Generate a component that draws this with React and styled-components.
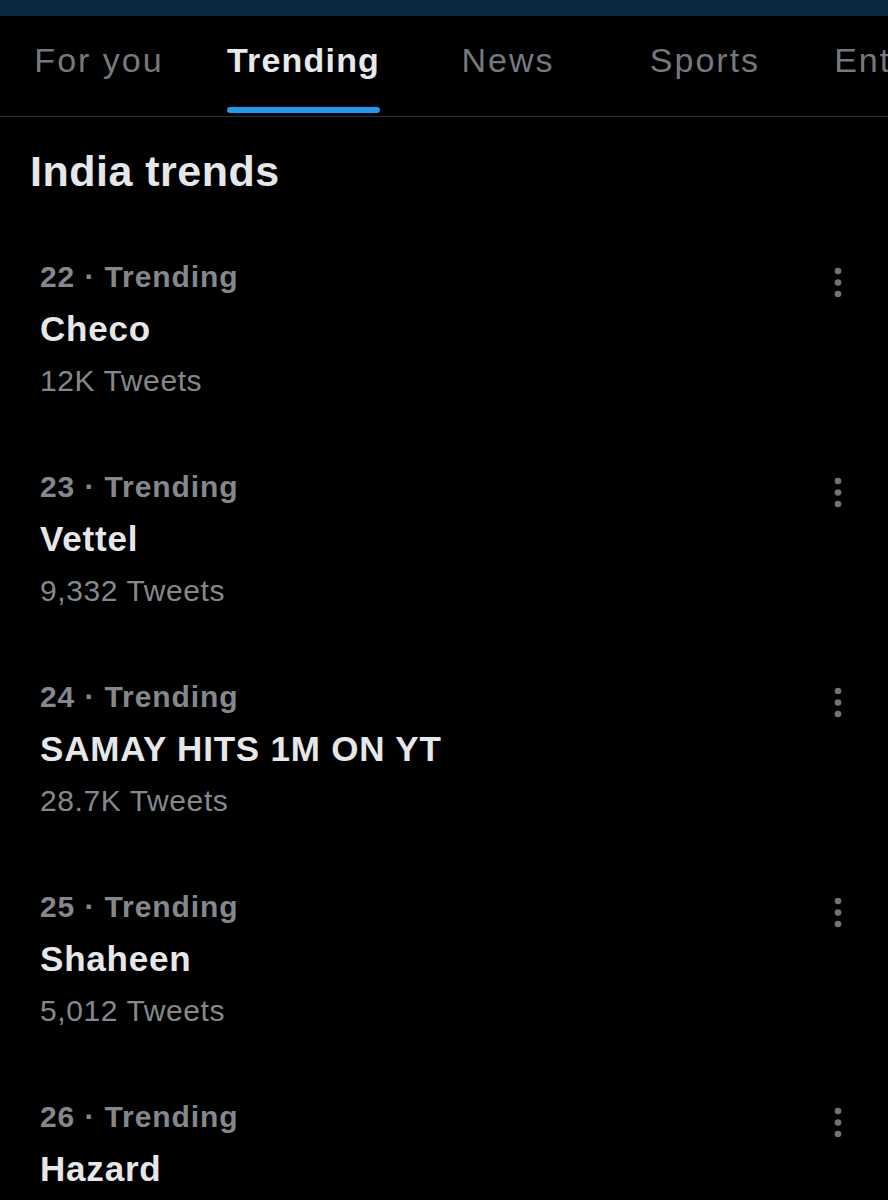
import React from "react";
import styled, { createGlobalStyle } from "styled-components";

const GlobalStyle = createGlobalStyle`
  html, body {
    margin: 0;
    padding: 0;
    background: #000;
  }
  body {
    font-family: "Liberation Sans", Arial, sans-serif;
    color: #e7e9ea;
  }
`;

const tabs = [
  { label: "For you", w: 198 },
  { label: "Trending", w: 211, active: true },
  { label: "News", w: 198 },
  { label: "Sports", w: 196 },
  { label: "Entertainment", w: 300 },
];

const trends = [
  { rank: 22, name: "Checo", count: "12K Tweets" },
  { rank: 23, name: "Vettel", count: "9,332 Tweets" },
  { rank: 24, name: "SAMAY HITS 1M ON YT", count: "28.7K Tweets" },
  { rank: 25, name: "Shaheen", count: "5,012 Tweets" },
  { rank: 26, name: "Hazard" },
];

function MoreIcon() {
  return (
    <svg width="8" height="31" viewBox="0 0 8 31">
      <circle cx="4" cy="4" r="3.3" fill="#707478" />
      <circle cx="4" cy="15.5" r="3.3" fill="#707478" />
      <circle cx="4" cy="27" r="3.3" fill="#707478" />
    </svg>
  );
}

function App() {
  return (
    <Page>
      <GlobalStyle />
      <StatusStrip />
      <TabBar>
        {tabs.map((t) => (
          <Tab key={t.label} $w={t.w}>
            <TabLabel $active={t.active}>
              {t.label}
              <Underline $active={t.active} />
            </TabLabel>
          </Tab>
        ))}
      </TabBar>
      <Title>India trends</Title>
      <List>
        {trends.map((t) => (
          <Trend key={t.rank}>
            <TrendText>
              <Meta>{t.rank} · Trending</Meta>
              <Name>{t.name}</Name>
              {t.count && <Count>{t.count}</Count>}
            </TrendText>
            <More>
              <MoreIcon />
            </More>
          </Trend>
        ))}
      </List>
    </Page>
  );
}

const Page = styled.div`
  width: 888px;
  height: 1200px;
  overflow: hidden;
  background: #000;
`;

const StatusStrip = styled.div`
  height: 16px;
  background: #0c2840;
`;

const TabBar = styled.div`
  display: flex;
  height: 100px;
  border-bottom: 1px solid #2f3336;
  overflow: hidden;
`;

const Tab = styled.div`
  flex: 0 0 ${(p) => p.$w}px;
  display: flex;
  justify-content: center;
  padding-top: 24px;
  box-sizing: border-box;
`;

const TabLabel = styled.div`
  display: flex;
  flex-direction: column;
  align-items: stretch;
  font-size: 34px;
  line-height: 40px;
  letter-spacing: ${(p) => (p.$active ? "1.2px" : "2px")};
  white-space: nowrap;
  font-weight: ${(p) => (p.$active ? 700 : 400)};
  color: ${(p) => (p.$active ? "#e7e9ea" : "#75797e")};
`;

const Underline = styled.div`
  height: 6px;
  margin-top: 27px;
  border-radius: 3px;
  background: ${(p) => (p.$active ? "#1d9bf0" : "transparent")};
`;

const Title = styled.h2`
  margin: 0;
  padding: 29px 30px 28px;
  font-size: 43px;
  line-height: 50px;
  font-weight: 700;
  letter-spacing: 0.5px;
  color: #e5e7e8;
`;

const List = styled.div`
  display: flex;
  flex-direction: column;
`;

const Trend = styled.div`
  display: flex;
  justify-content: space-between;
  align-items: flex-start;
  padding: 35px 46px 35px 40px;
`;

const TrendText = styled.div`
  display: flex;
  flex-direction: column;
  gap: 14px;
`;

const Meta = styled.div`
  font-size: 30px;
  line-height: 36px;
  font-weight: 700;
  letter-spacing: 0.9px;
  color: #84888d;
`;

const Name = styled.div`
  font-size: 35px;
  line-height: 40px;
  font-weight: 700;
  letter-spacing: 0.8px;
  color: #e5e7e8;
`;

const Count = styled.div`
  font-size: 30px;
  line-height: 36px;
  letter-spacing: 0.6px;
  color: #84888d;
`;

const More = styled.div`
  margin-top: 8px;
  display: flex;
`;

export default App;
